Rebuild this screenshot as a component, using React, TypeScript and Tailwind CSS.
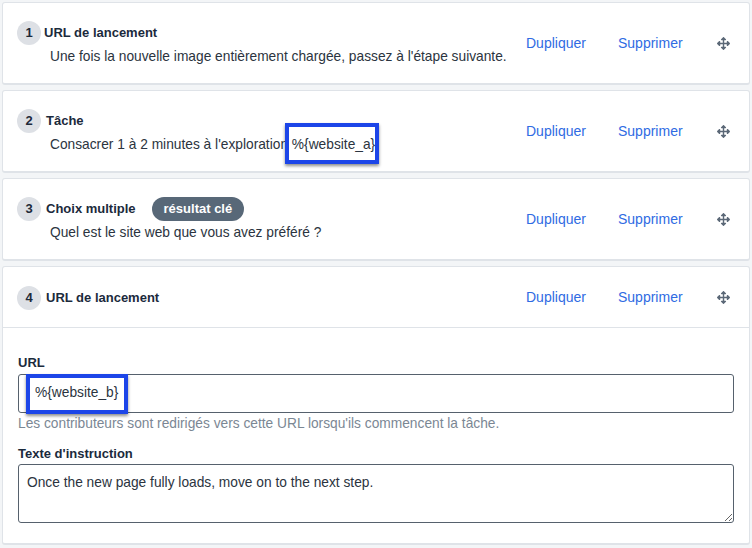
import React from "react";
import { FaArrowsAlt } from "react-icons/fa";

const font = { fontFamily: '"Liberation Sans", Arial, sans-serif' };

function Num({ n }: { n: number }) {
  return (
    <div className="flex h-[24px] w-[24px] shrink-0 items-center justify-center rounded-full bg-[#dde0e5] text-[13px] font-bold text-[#1d2a3a]">
      {n}
    </div>
  );
}

function Actions() {
  return (
    <div className="flex shrink-0 items-center text-[14px] text-[#2f6be3]">
      <span className="w-[92px]">Dupliquer</span>
      <span className="w-[99px]">Supprimer</span>
      <FaArrowsAlt className="h-[13px] w-[13px] text-[#5b6877]" />
    </div>
  );
}

function Highlight({ children, className }: { children: React.ReactNode; className: string }) {
  return (
    <span className="relative inline-block">
      {children}
      <span className={"pointer-events-none absolute border-[4px] border-[#1c45e8] shadow-[0_2px_3px_rgba(0,0,0,0.45)] " + className} />
    </span>
  );
}

function Card({
  n,
  title,
  desc,
  badge,
  gap,
}: {
  n: number;
  title: string;
  desc: React.ReactNode;
  badge?: string;
  gap: string;
}) {
  return (
    <div className="flex h-[83px] items-center rounded-[3px] border border-b-[2px] border-[#dfe3e8] bg-white pl-[14px] pr-[19px]">
      <div className="flex flex-1 flex-col pt-[2px]">
        <div className={"flex items-center " + gap}>
          <Num n={n} />
          <span className="text-[13px] font-bold text-[#1b2a3c]">{title}</span>
          {badge && (
            <span className="ml-[11px] flex h-[24px] items-center rounded-full bg-[#586878] px-[12px] text-[13px] font-bold text-white">
              {badge}
            </span>
          )}
        </div>
        <div className="mt-[2px] pl-[33px] text-[13.75px] leading-[20px] text-[#2b3440]">{desc}</div>
      </div>
      <Actions />
    </div>
  );
}

export default function App() {
  return (
    <div className="flex h-[548px] w-[752px] flex-col gap-[5px] bg-[#f3f5f7] px-[2px] pt-[2px]" style={font}>
      <Card
        n={1}
        gap="gap-[3px]"
        title="URL de lancement"
        desc="Une fois la nouvelle image entièrement chargée, passez à l'étape suivante."
      />
      <Card
        n={2}
        gap="gap-[5px]"
        title="Tâche"
        desc={
          <>
            Consacrer 1 à 2 minutes à l'exploration{" "}
            <Highlight className="-left-[7px] -right-[4px] -top-[12px] -bottom-[9px]">%{"{website_a}"}</Highlight>
          </>
        }
      />
      <Card
        n={3}
        gap="gap-[5px]"
        title="Choix multiple"
        badge="résultat clé"
        desc="Quel est le site web que vous avez préféré ?"
      />
      <div className="flex flex-col rounded-[3px] border border-b-[2px] border-[#dfe3e8] bg-white">
        <div className="flex h-[61px] items-center border-b border-[#dfe3e8] pl-[14px] pr-[19px]">
          <div className="flex flex-1 items-center gap-[5px] pt-[1px]">
            <Num n={4} />
            <span className="text-[13px] font-bold text-[#1b2a3c]">URL de lancement</span>
          </div>
          <Actions />
        </div>
        <div className="flex flex-col px-[15px] pb-[20px] pt-[27px]">
          <label className="text-[13px] font-bold leading-[16px] text-[#1b2a3c]">URL</label>
          <div className="mt-[3px] flex h-[39px] items-center rounded-[3px] border border-[#56616d] pl-[16px] text-[13.75px] text-[#2b3440]">
            <Highlight className="-left-[9px] -right-[10px] -top-[9px] -bottom-[10px]">%{"{website_b}"}</Highlight>
          </div>
          <div className="mt-[2px] text-[13.75px] leading-[18px] text-[#7b8794]">
            Les contributeurs sont redirigés vers cette URL lorsqu'ils commencent la tâche.
          </div>
          <label className="mt-[13px] text-[13px] font-bold leading-[16px] text-[#1b2a3c]">Texte d'instruction</label>
          <textarea
            className="mt-[2px] h-[59px] resize-y rounded-[3px] border border-[#56616d] px-[8px] py-[8px] text-[13.75px] leading-[20px] text-[#2b3440] outline-none"
            style={font}
            defaultValue="Once the new page fully loads, move on to the next step."
          />
        </div>
      </div>
    </div>
  );
}
